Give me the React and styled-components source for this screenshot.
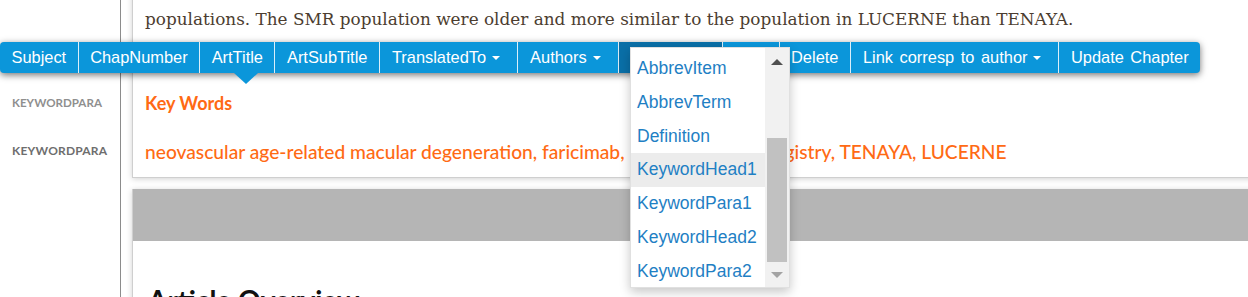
import React from 'react';
import styled, { createGlobalStyle } from 'styled-components';

const Global = createGlobalStyle`
  html, body { margin: 0; padding: 0; background: #fff; }
  body { width: 1248px; height: 297px; overflow: hidden; }
`;

const Page = styled.div`
  position: relative;
  display: flex;
  height: 297px;
  overflow: hidden;
`;

const Sidebar = styled.aside`
  flex: 0 0 108px;
  border-right: 1px solid #8c8c8c;
  display: flex;
  flex-direction: column;
  gap: 34px;
  padding: 96px 0 0 12px;
`;

const TagLabel = styled.div`
  font-family: Lato, "Noto Sans", sans-serif;
  font-size: ${p => (p.$strong ? '12px' : '11.6px')};
  line-height: 14px;
  font-weight: 700;
  letter-spacing: ${p => (p.$strong ? '0.2px' : '0')};
  color: ${p => (p.$strong ? '#6e6e6e' : '#8f8f8f')};
  text-transform: uppercase;
`;

const Main = styled.main`
  flex: 1;
  padding-left: 11px;
  margin-right: -20px;
  display: flex;
  flex-direction: column;
`;

const Card = styled.section`
  background: #fff;
  border: 1px solid #cfcfcf;
  box-shadow: 0 1px 6px rgba(0, 0, 0, 0.18);
`;

const TextCard = styled(Card)`
  margin-top: -20px;
  padding: 26px 12px 13px 12px;
`;

const BodyText = styled.p`
  margin: 0;
  font-family: "DejaVu Serif", Georgia, serif;
  font-size: 16.85px;
  line-height: 24px;
  color: #4c3d30;
  white-space: nowrap;
`;

const KeyHead = styled.h3`
  margin: 60px 0 0 0;
  font-family: Lato, "Noto Sans", sans-serif;
  font-size: 18px;
  font-weight: 700;
  line-height: 24px;
  color: #ff6a14;
`;

const KeyPara = styled.p`
  margin: 25px 0 0 0;
  font-family: Lato, "Noto Sans", sans-serif;
  font-size: 19.2px;
  font-weight: 500;
  line-height: 24px;
  color: #ff6a14;
  white-space: nowrap;
`;

const SectionCard = styled(Card)`
  margin-top: 11px;
  flex: 1;
  border-top: none;
`;

const SectionBar = styled.div`
  height: 52px;
  background: #b5b5b5;
`;

const SectionTitle = styled.h2`
  margin: 43px 0 0 15px;
  font-family: Lato, "Noto Sans", sans-serif;
  font-size: 28px;
  font-weight: 700;
  line-height: 32px;
  color: #111;
`;

const Toolbar = styled.nav`
  position: absolute;
  top: 42px;
  left: 0;
  display: flex;
  height: 31px;
  background: #0b96da;
  border-radius: 4px;
  box-shadow: 0 2px 7px rgba(0, 0, 0, 0.55);
`;

const ToolButton = styled.div`
  display: flex;
  align-items: center;
  padding: ${p => (p.$caret ? '0 17px 0 12px' : '0 11.5px')};
  font-family: "Liberation Sans", Arial, sans-serif;
  font-size: 16.4px;
  word-spacing: 2px;
  color: #fff;
  white-space: nowrap;
  background: ${p => (p.$active ? '#0a6fa7' : 'transparent')};
  border-left: ${p => (p.$first ? 'none' : '1px solid rgba(255,255,255,0.85)')};
  border-radius: ${p => (p.$first ? '4px 0 0 4px' : p.$last ? '0 4px 4px 0' : '0')};
`;

const Caret = styled.span`
  display: inline-block;
  margin-left: 6px;
  width: 0;
  height: 0;
  border-top: 4.5px solid #fff;
  border-left: 4.5px solid transparent;
  border-right: 4.5px solid transparent;
`;

const Pointer = styled.span`
  position: absolute;
  top: 31px;
  left: 234px;
  width: 0;
  height: 0;
  border-top: 11px solid #0b96da;
  border-left: 12px solid transparent;
  border-right: 12px solid transparent;
`;

const Menu = styled.div`
  position: absolute;
  top: 47px;
  left: 630px;
  width: 160px;
  height: 241px;
  box-sizing: border-box;
  display: flex;
  background: #fff;
  border: 1px solid rgba(0, 0, 0, 0.12);
  box-shadow: 0 4px 10px rgba(0, 0, 0, 0.22);
`;

const MenuList = styled.ul`
  flex: 1;
  list-style: none;
  margin: 0;
  padding: 4px 0 0 0;
  overflow: hidden;
`;

const MenuItem = styled.li`
  height: 33.8px;
  line-height: 33.8px;
  padding-left: 6px;
  font-family: "Liberation Sans", Arial, sans-serif;
  font-size: 17.5px;
  color: #1f80c4;
  background: ${p => (p.$hover ? '#ececec' : 'transparent')};
  white-space: nowrap;
`;

const ScrollBar = styled.div`
  flex: 0 0 24px;
  display: flex;
  flex-direction: column;
  background: #f1f1f1;
`;

const ScrollButton = styled.div`
  height: ${p => p.$h}px;
  display: flex;
  align-items: center;
  justify-content: center;
`;

const ArrowUp = styled.span`
  width: 0;
  height: 0;
  border-bottom: 6px solid #505050;
  border-left: 6px solid transparent;
  border-right: 6px solid transparent;
`;

const ArrowDown = styled.span`
  width: 0;
  height: 0;
  border-top: 6px solid #a3a3a3;
  border-left: 6px solid transparent;
  border-right: 6px solid transparent;
`;

const Track = styled.div`
  flex: 1;
  display: flex;
  flex-direction: column;
  justify-content: flex-end;
  padding: 0 2px;
`;

const Thumb = styled.div`
  height: 124px;
  background: #c1c1c1;
`;

const tools = [
  { label: 'Subject' },
  { label: 'ChapNumber' },
  { label: 'ArtTitle' },
  { label: 'ArtSubTitle' },
  { label: 'TranslatedTo', caret: true },
  { label: 'Authors', caret: true },
  { label: 'Element', caret: true, active: true },
  { label: 'New' },
  { label: 'Delete' },
  { label: 'Link corresp to author', caret: true },
  { label: 'Update Chapter' },
];

const items = ['AbbrevItem', 'AbbrevTerm', 'Definition', 'KeywordHead1', 'KeywordPara1', 'KeywordHead2', 'KeywordPara2'];

export default function App() {
  return (
    <Page>
      <Global />
      <Sidebar>
        <TagLabel>KEYWORDPARA</TagLabel>
        <TagLabel $strong>KEYWORDPARA</TagLabel>
      </Sidebar>
      <Main>
        <TextCard>
          <BodyText>
            populations. The SMR population were older and more similar to the population in LUCERNE than TENAYA.
          </BodyText>
          <KeyHead>Key Words</KeyHead>
          <KeyPara>
            neovascular age-related macular degeneration, faricimab, real world, SMR registry, TENAYA, LUCERNE
          </KeyPara>
        </TextCard>
        <SectionCard>
          <SectionBar />
          <SectionTitle>Article Overview</SectionTitle>
        </SectionCard>
      </Main>

      <Toolbar>
        {tools.map((t, i) => (
          <ToolButton
            key={t.label}
            $first={i === 0}
            $last={i === tools.length - 1}
            $active={t.active}
            $caret={t.caret}
          >
            {t.label}
            {t.caret && <Caret />}
          </ToolButton>
        ))}
        <Pointer />
      </Toolbar>

      <Menu>
        <MenuList>
          {items.map(it => (
            <MenuItem key={it} $hover={it === 'KeywordHead1'}>{it}</MenuItem>
          ))}
        </MenuList>
        <ScrollBar>
          <ScrollButton $h={28}><ArrowUp /></ScrollButton>
          <Track><Thumb /></Track>
          <ScrollButton $h={25}><ArrowDown /></ScrollButton>
        </ScrollBar>
      </Menu>
    </Page>
  );
}
